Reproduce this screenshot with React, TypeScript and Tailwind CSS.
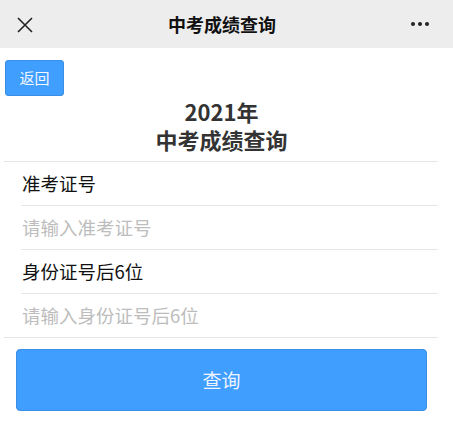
const font = "font-['Noto_Sans_CJK_SC','Noto_Sans',sans-serif]";

function Row({ text, hint, last }: { text: string; hint?: boolean; last?: boolean }) {
  return (
    <div className={"ml-[17px] flex items-center " + (last ? "h-[43px]" : "h-[44px] border-b border-[#e6e6e6]")}>
      <span className={"pl-[1px] text-[18.5px] leading-none " + (hint ? "text-[#bdbdbd]" : "text-[#111]")}>{text}</span>
    </div>
  );
}

export default function App() {
  return (
    <div className={"w-[453px] h-[441px] bg-white " + font}>
      {/* top bar */}
      <div className="h-12 bg-[#ededed]">
        <div className="flex h-12 w-[443px] items-center justify-between pl-[17px] pr-[14px]">
          <svg width="16" height="16" viewBox="0 0 16 16" className="mt-[1px]">
            <path d="M1 1L15 15M15 1L1 15" stroke="#222" strokeWidth="1.6" fill="none" />
          </svg>
          <span className="text-[18px] font-semibold text-[#111]">中考成绩查询</span>
          <div className="flex gap-[3px]">
            <span className="h-[4px] w-[4px] rounded-full bg-[#222]" />
            <span className="h-[4px] w-[4px] rounded-full bg-[#222]" />
            <span className="h-[4px] w-[4px] rounded-full bg-[#222]" />
          </div>
        </div>
      </div>

      <div className="w-[443px] pt-3">
        <button className="ml-[5px] flex h-[36px] w-[59px] items-center justify-center rounded-[3px] border border-[#3a8ee6] bg-[#409eff] text-[15px] text-[#f4f8ff]">
          返回
        </button>
        <div className="mt-[1px] text-center text-[22px] font-bold leading-[28px] text-[#333]">
          <div>2021年</div>
          <div>中考成绩查询</div>
        </div>

        <div className="ml-[4px] mt-[8px] w-[434px] border-y border-[#e6e6e6]">
          <Row text="准考证号" />
          <Row text="请输入准考证号" hint />
          <Row text="身份证号后6位" />
          <Row text="请输入身份证号后6位" hint last />
        </div>

        <button className="ml-[16px] mt-[11px] flex h-[62px] w-[411px] items-center justify-center rounded-[4px] border border-[#3a8ee6] bg-[#409eff] text-[19px] text-[#eef5ff]">
          查询
        </button>
      </div>
    </div>
  );
}
